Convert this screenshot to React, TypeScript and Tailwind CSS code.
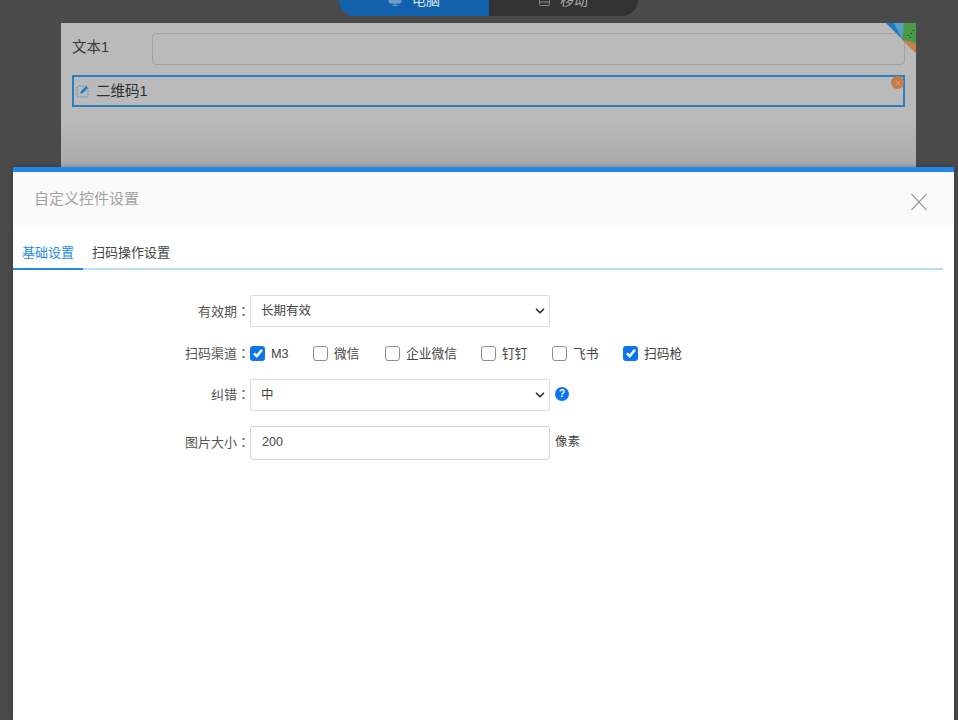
import { ChevronDown, Monitor, X } from "lucide-react";

const cjk = { fontFamily: '"Liberation Sans", "Noto Sans CJK SC", sans-serif' };

function FormRow({ label, children }: { label: string; children: React.ReactNode }) {
  return (
    <div className="flex items-center">
      <div className="w-[237px] text-right text-[13px] text-[#555]">
        {label}
        <span style={{ fontFamily: '"Noto Sans CJK TC", sans-serif' }}>：</span>
      </div>
      {children}
    </div>
  );
}

function FakeSelect({ value }: { value: string }) {
  return (
    <div className="flex h-[32px] w-[300px] items-center justify-between rounded-[2px] border border-[#dcdcdc] bg-white pl-[10px] pr-[2px] text-[12.5px] text-[#444]">
      <span className="pt-[1px]">{value}</span>
      <ChevronDown size={14} strokeWidth={3} className="text-[#333]" />
    </div>
  );
}

function Check({ label, on, width }: { label: string; on?: boolean; width: string }) {
  return (
    <div className={`flex items-center gap-[6px] text-[12.75px] text-[#444] ${width}`}>
      {on ? (
        <span className="flex h-[15px] w-[15px] items-center justify-center rounded-[3px] bg-[#0b76f0]">
          <svg width="12" height="12" viewBox="0 0 12 12" fill="none" stroke="white" strokeWidth="2.5">
            <path d="M2 6.3l2.8 2.8L10 2.8" />
          </svg>
        </span>
      ) : (
        <span className="h-[15px] w-[15px] rounded-[3px] border-[1.5px] border-[#8f8f8f] bg-white" />
      )}
      <span>{label}</span>
    </div>
  );
}

export default function App() {
  return (
    <div className="relative h-[720px] w-[958px] overflow-hidden bg-[#4a4a4a]" style={cjk}>
      <div className="ml-[61px] mr-[42px]">
        <div className="flex h-[23px] justify-center">
          <div className="h-[16px] w-[299px] overflow-hidden rounded-b-[16px] text-[14px]">
            <div className="-mt-[16px] flex h-[32px]">
              <div className="flex w-[150px] items-center justify-center gap-[10px] bg-[#1261ac] text-[#d8e4ee]">
                <Monitor size={14} className="fill-[#6fa0c4] text-[#6fa0c4]" />
                电脑
              </div>
              <div className="flex flex-1 items-center justify-center gap-[10px] bg-[#333] text-[#aaa]">
                <svg width="11" height="12" viewBox="0 0 11 12" fill="none" stroke="#8a8a8a">
                  <rect x="0.5" y="0.5" width="10" height="11" rx="1" />
                  <path d="M0.5 8h10" />
                </svg>
                移动
              </div>
            </div>
          </div>
        </div>

        <div className="relative h-[160px] overflow-hidden bg-gradient-to-b from-[#bababa] from-60% to-[#a4a4a4] px-[11px] pt-[10px]">
          <div className="flex h-[32px] items-center">
            <div className="w-[80px] pb-[3px] text-[14.5px] text-[#3a3a3a]">文本1</div>
            <div className="h-[32px] flex-1 rounded-[4px] border border-[#a2a2a2]" />
          </div>
          <div className="relative mt-[10px] flex h-[32px] items-center border-2 border-[#2a7fc0] pl-[2px] text-[14.5px] text-[#2f2f2f]">
            <svg width="14" height="14" viewBox="0 0 14 14" fill="none" className="mr-[6px]">
              <rect x="1" y="2" width="11" height="11" rx="2" stroke="#4b93c8" strokeDasharray="2 1" />
              <path d="M4 10l1-3 5-5 2 2-5 5z" fill="#1f7fc4" />
            </svg>
            <span className="pt-[2px]">二维码1</span>
            <span className="absolute right-[-1px] top-[-1px] flex h-[13px] w-[13px] items-center justify-center rounded-full bg-[#c67a45]">
              <X size={8} strokeWidth={2} className="text-[#c9b3a5]" />
            </span>
          </div>
          <svg width="30" height="30" viewBox="0 0 30 30" className="absolute right-0 top-0">
            <polygon points="0,0 30,30 30,0" fill="#5a9fc4" />
            <polygon points="0,0 8,0 16,16" fill="#2279c6" />
            <polygon points="18,0 30,0 30,20 16,17" fill="#4a9a45" />
            <polygon points="16,17 30,20 30,30" fill="#c87f45" />
            <path d="M22 12h1v1h-1zM25 10h1v1h-1zM27 7h1v1h-1zM24 14h1v1h-1z" fill="#2c3c2c" />
          </svg>
        </div>
      </div>

      <div className="absolute bottom-0 left-[13px] top-[167px] w-[941px] border-t-[5px] border-[#2288ee] bg-white shadow-[0_0_6px_rgba(0,0,0,0.25)]">
        <div className="flex h-[54px] items-center justify-between bg-[#fafafa] pl-[21px] pr-[26px]">
          <span className="pt-[1px] text-[15px] text-[#a3a3a3]">自定义控件设置</span>
          <svg width="18" height="18" viewBox="0 0 18 18" stroke="#9a9a9a" strokeWidth="1.1" className="mt-[5px]">
            <path d="M1.5 1l15 16M16.5 1L1.5 17" />
          </svg>
        </div>
        <div className="mr-[11px] flex h-[44px] border-b-2 border-[#b9dcfb] text-[13px]">
          <div className="-mb-[2px] flex w-[70px] items-end justify-center border-b-2 border-[#2288ee] pb-[6px] text-[#2288ee]">基础设置</div>
          <div className="flex items-end pb-[6px] pl-[9px] text-[#444]">扫码操作设置</div>
        </div>
        <div className="mt-[25px] flex flex-col">
          <FormRow label="有效期">
            <FakeSelect value="长期有效" />
          </FormRow>
          <div className="mt-[16px]">
            <FormRow label="扫码渠道">
              <Check label="M3" on width="w-[63px]" />
              <Check label="微信" width="w-[72px]" />
              <Check label="企业微信" width="w-[96px]" />
              <Check label="钉钉" width="w-[71px]" />
              <Check label="飞书" width="w-[71px]" />
              <Check label="扫码枪" on width="w-[70px]" />
            </FormRow>
          </div>
          <div className="mt-[15px]">
            <FormRow label="纠错">
              <FakeSelect value="中" />
              <span className="ml-[5px] flex h-[14px] w-[14px] -translate-y-[1px] items-center justify-center rounded-full bg-[#0b76f0] text-[10px] font-bold text-white">?</span>
            </FormRow>
          </div>
          <div className="mt-[15px]">
            <FormRow label="图片大小">
              <div className="flex h-[34px] w-[300px] items-center rounded-[3px] border border-[#d5d5d5] bg-white pl-[11px] text-[12.5px] text-[#444]">200</div>
              <span className="ml-[5px] text-[12.5px] text-[#444]">像素</span>
            </FormRow>
          </div>
        </div>
      </div>
    </div>
  );
}
